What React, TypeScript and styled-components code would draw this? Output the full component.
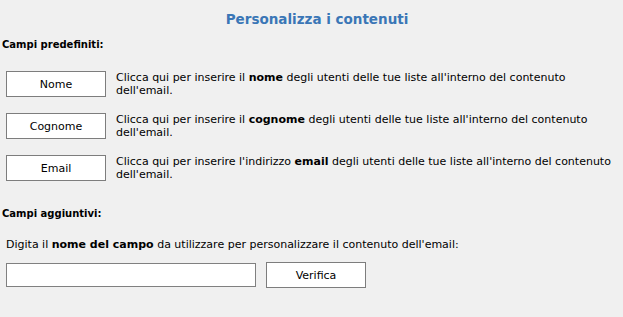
import React from 'react'
import styled, { createGlobalStyle } from 'styled-components'

const GlobalStyle = createGlobalStyle`
  html, body {
    margin: 0;
    padding: 0;
    background: #f0f0f0;
  }
  body {
    font-family: 'DejaVu Sans', Verdana, sans-serif;
    font-size: 11px;
    color: #000;
  }
`

const Page = styled.div`
  width: 623px;
  height: 317px;
  padding-top: 11px;
  box-sizing: border-box;
  background: #f0f0f0;
`

const Title = styled.h2`
  margin: 0;
  padding-left: 11px;
  text-align: center;
  font-size: 13.5px;
  line-height: 17px;
  font-weight: bold;
  color: #3a76b6;
`

const SectionLabel = styled.div<{ $top: number }>`
  margin-top: ${({ $top }) => $top}px;
  padding-left: 2px;
  font-size: 10px;
  line-height: 12px;
  font-weight: bold;
`

const FieldList = styled.div`
  margin-top: 20px;
  display: flex;
  flex-direction: column;
  gap: 16px;
`

const FieldRow = styled.div`
  display: flex;
  align-items: flex-start;
  gap: 10px;
  padding-left: 6px;
  padding-right: 6px;
`

const FieldButton = styled.button`
  flex: 0 0 auto;
  width: 100px;
  height: 26px;
  padding: 0;
  box-sizing: border-box;
  background: #fff;
  border: 1px solid #7d7d7d;
  border-radius: 0;
  font-family: 'DejaVu Sans', Verdana, sans-serif;
  font-size: 11px;
  color: #000;
  cursor: pointer;
`

const Hint = styled.div`
  flex: 1;
  line-height: 13px;
`

const Intro = styled.div`
  margin-top: 18px;
  padding-left: 6px;
  line-height: 13px;
`

const CustomRow = styled.div`
  margin-top: 11px;
  display: flex;
  align-items: center;
  gap: 10px;
  padding-left: 6px;
`

const FieldInput = styled.input`
  width: 250px;
  height: 24px;
  box-sizing: border-box;
  margin: 0;
  background: #fff;
  border: 1px solid #808080;
  border-radius: 0;
  font-family: 'DejaVu Sans', Verdana, sans-serif;
  font-size: 11px;
`

const fields = [
  { id: 1, label: 'Nome', before: 'Clicca qui per inserire il ', bold: 'nome' },
  { id: 2, label: 'Cognome', before: 'Clicca qui per inserire il ', bold: 'cognome' },
  { id: 3, label: 'Email', before: "Clicca qui per inserire l'indirizzo ", bold: 'email' }
]

export default function App() {
  return (
    <Page>
      <GlobalStyle />
      <Title>Personalizza i contenuti</Title>
      <SectionLabel $top={11}>Campi predefiniti:</SectionLabel>
      <FieldList>
        {fields.map(item => (
          <FieldRow key={item.id}>
            <FieldButton>{item.label}</FieldButton>
            <Hint>
              {item.before}
              <b>{item.bold}</b> degli utenti delle tue liste all'interno del contenuto dell'email.
            </Hint>
          </FieldRow>
        ))}
      </FieldList>
      <SectionLabel $top={27}>Campi aggiuntivi:</SectionLabel>
      <Intro>
        Digita il <b>nome del campo</b> da utilizzare per personalizzare il contenuto dell'email:
      </Intro>
      <CustomRow>
        <FieldInput type="text" />
        <FieldButton>Verifica</FieldButton>
      </CustomRow>
    </Page>
  )
}
